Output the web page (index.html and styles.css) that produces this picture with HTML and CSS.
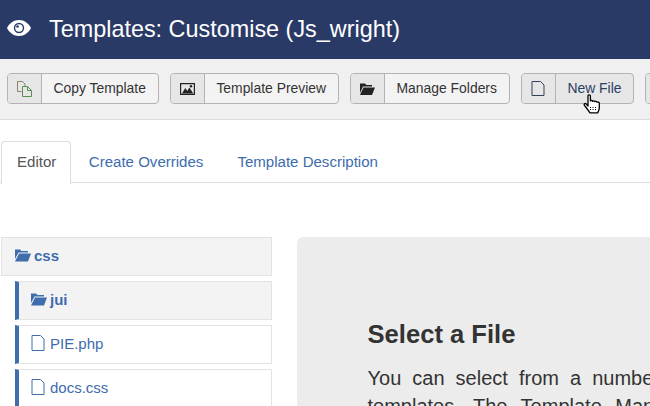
FILE: index.html
```html
<!DOCTYPE html>
<html lang="en">
<head>
<meta charset="utf-8">
<title>Templates: Customise (Js_wright)</title>
<link rel="stylesheet" href="styles.css">
</head>
<body>
<header class="header">
  <svg class="eye" viewBox="0 0 24 16" width="24" height="16"><path fill="#fff" fill-rule="evenodd" d="M12 0C6.600 0 2.400 3.400 0 8c2.400 4.600 6.600 8 12 8s9.600-3.400 12-8c-2.400-4.600-6.600-8-12-8zM12 2.800a5.200 5.200 0 1 1 0 10.400 5.200 5.200 0 0 1 0-10.400z"/><circle cx="12" cy="8" r="3.800" fill="#fff"/><circle cx="10.500" cy="6.500" r="1.300" fill="#2a3a67"/></svg>
  <h1 class="title">Templates: Customise (Js_wright)</h1>
</header>
<nav class="toolbar">
  <a class="btn"><span class="btn-icon"><svg viewBox="0 0 16 16" width="16" height="16" fill="none"><path stroke="#8a8468" d="M.500 .500h5l2.500 2.500v2M.500 .500v10h4"/><path stroke="#5a8f4f" d="M5.500 5.500h5l4 4v6h-9z"/><path stroke="#5a8f4f" d="M10.500 5.500v4h4"/></svg></span><span class="btn-text">Copy Template</span></a>
  <a class="btn"><span class="btn-icon"><svg viewBox="0 0 15 12" width="15" height="12"><path fill="#222" fill-rule="evenodd" d="M0 0h15v12H0zM1.200 1.200v9.600h12.600V1.200z"/><path fill="#222" d="M2 10.500l3.300-5.500 2 3 2-3.500 4 6z"/><circle cx="11" cy="3.200" r="1.200" fill="#222"/></svg></span><span class="btn-text">Template Preview</span></a>
  <a class="btn"><span class="btn-icon"><svg viewBox="0 0 15 12" width="15" height="12"><path fill="#222" d="M0 .500h5L6.500 2H12v1.500H3L0 10z"/><path fill="#222" d="M3.500 4.500H15L12 12H0z"/></svg></span><span class="btn-text">Manage Folders</span></a>
  <a class="btn btn-hover"><span class="btn-icon"><svg viewBox="0 0 14 15" width="14" height="15" fill="none" stroke="#33415f"><path d="M1 .500h8.500L13 4v10.500H1z"/></svg></span><span class="btn-text">New File</span></a>
  <a class="btn"><span class="btn-icon"></span></a>
</nav>
<div class="tabs">
  <a class="tab tab-active">Editor</a>
  <a class="tab">Create Overrides</a>
  <a class="tab">Template Description</a>
</div>
<main class="content">
  <aside class="tree">
    <div class="node node-folder"><svg class="ico" viewBox="0 0 16 13" width="16" height="13"><path fill="#3f6ead" d="M0 .500h5L6.500 2H13v1.500H3.500L0 10z"/><path fill="#3f6ead" d="M4 4.500h12l-3 8H0z"/></svg>css</div>
    <div class="node node-folder node-child"><svg class="ico" viewBox="0 0 16 13" width="16" height="13"><path fill="#3f6ead" d="M0 .500h5L6.500 2H13v1.500H3.500L0 10z"/><path fill="#3f6ead" d="M4 4.500h12l-3 8H0z"/></svg>jui</div>
    <div class="node node-child"><svg class="ico-file" viewBox="0 0 14 16" width="14" height="16" fill="none" stroke="#3f6ead"><path d="M1 .500h8.500L13 4v11.500H1z"/></svg>PIE.php</div>
    <div class="node node-child"><svg class="ico-file" viewBox="0 0 14 16" width="14" height="16" fill="none" stroke="#3f6ead"><path d="M1 .500h8.500L13 4v11.500H1z"/></svg>docs.css</div>
  </aside>
  <section class="panel">
    <h2 class="panel-title">Select a File</h2>
    <p class="panel-text"><span class="line line-first">You can select from a number of files</span><span class="line line-second">templates. The Template Manager lets</span></p>
  </section>
</main>
<svg class="cursor" viewBox="0 0 18 20" width="18" height="20"><path fill="#fff" stroke="#000" stroke-width="1.300" stroke-linejoin="round" d="M5 1.800c0-1.300 2.400-1.300 2.400 0V7c.5-.8 2.200-.8 2.200.3.500-.8 2.200-.6 2.200.4.500-.6 2.200-.4 2.200.6.500-.4 2.300-.2 2.300.9v4.800c0 2-1 3-1.500 4.800H7C5.300 16.300 3.200 13.500 1.500 11.500c-1-1.500.6-2.600 1.600-1.600L5 12z"/><path stroke="#000" stroke-dasharray="1 1" d="M7.500 13v3M10 13v3M12.500 13v3"/></svg>
</body>
</html>
```
FILE: styles.css
```css
* { box-sizing: border-box; }
html, body { margin: 0; height: 406px; overflow: hidden; }
body { width: 650px; position: relative; background: #fff; font-family: "Liberation Sans", Arial, sans-serif; color: #333; }
.header { height: 59px; background: #2a3a67; display: flex; align-items: center; padding: 0 0 0 7px; gap: 18px; }
.eye { flex: none; margin-top: -4px; }
.title { margin: 0; font-size: 23.400px; font-weight: 400; color: #fff; white-space: nowrap; }
.toolbar { height: 61px; background: #f0f0f0; border-bottom: 1px solid #dcdcdc; display: flex; align-items: flex-start; gap: 11px; padding: 14px 0 0 7px; white-space: nowrap; }
.btn { flex: none; display: flex; height: 31px; border: 1px solid #b3b3b3; border-radius: 4px; background: #f3f3f3; color: #333; font-size: 13.900px; overflow: hidden; }
.btn-hover { background: #e6e6e6; color: #2b3f63; }
.btn-icon { width: 34px; background: #e6e6e6; border-right: 1px solid #b3b3b3; display: flex; align-items: center; justify-content: center; }
.btn-text { padding: 0 12px 0 11.500px; line-height: 29px; }
.tabs { margin-top: 21px; height: 42px; border-bottom: 1px solid #ddd; display: flex; gap: 1px; padding-left: 1px; font-size: 15.050px; color: #3d6cad; }
.tab { height: 42px; padding: 0 15.500px; line-height: 40px; border: 1px solid transparent; border-bottom: 0; }
.tab-active { color: #555; background: #fff; border-color: #ddd; border-radius: 4px 4px 0 0; padding: 0 14px 0 15px; height: 43px; }
.content { display: flex; align-items: flex-start; padding: 54px 0 0 1px; gap: 25px; }
.tree { width: 271px; flex: none; display: flex; flex-direction: column; gap: 5px; }
.node { height: 39px; display: flex; align-items: center; border: 1px solid #e3e3e3; padding: 0 0 2px 13px; font-size: 15px; color: #3d6cad; white-space: nowrap; }
.node-folder { background: #f3f3f3; font-weight: 700; }
.node-child { margin-left: 14px; border-left: 4px solid #3f6ead; padding-left: 12px; }
.ico { margin-right: 3px; }
.ico-file { margin-right: 5px; margin-top: -2px; }
.panel { flex: none; width: 353px; height: 169px; background: #ececec; border-radius: 6px 0 0 0; padding: 82px 0 0 70.500px; overflow: hidden; }
.panel-title { margin: 0 0 15px; font-size: 25.600px; line-height: 30px; font-weight: 700; color: #333; white-space: nowrap; }
.panel-text { margin: 0; font-size: 20px; line-height: 28px; color: #333; white-space: nowrap; }
.line { display: block; }
.line-first { word-spacing: 5.500px; }
.line-second { word-spacing: 8px; }
.cursor { position: absolute; left: 583px; top: 94px; }
```
